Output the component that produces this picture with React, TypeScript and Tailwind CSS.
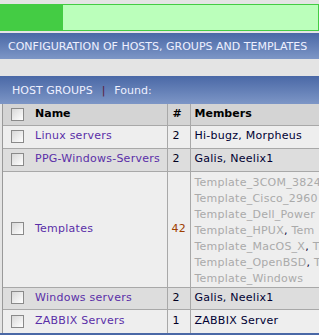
import React from "react";

const font = { fontFamily: '"DejaVu Sans", Verdana, sans-serif' };

function Check() {
  return (
    <span className="inline-block w-[13px] h-[13px] border border-[#8a8a8a] bg-gradient-to-br from-[#d8d8d8] to-[#ffffff] align-middle" />
  );
}

const templates = [
  "Template_3COM_3824",
  "Template_Cisco_2960",
  "Template_Dell_Power",
  "Template_HPUX, Tem",
  "Template_MacOS_X, T",
  "Template_OpenBSD, T",
  "Template_Windows",
];

type Row = { name: string; count: string; members: string; bg: string };

export default function App() {
  const rows: Row[] = [
    { name: "Linux servers", count: "2", members: "Hi-bugz, Morpheus", bg: "bg-[#eeeeee]" },
    { name: "PPG-Windows-Servers", count: "2", members: "Galis, Neelix1", bg: "bg-[#dddddd]" },
  ];
  return (
    <div className="w-[319px] h-[335px] overflow-hidden bg-[#e4e4e4] text-[11px]" style={font}>
      <div className="h-[4px]" />
      <div className="h-[27px] flex border border-[#44cc44] bg-[#bbffbb]">
        <div className="w-[62px] bg-[#44cc44]" />
      </div>
      <div className="h-[2px]" />
      <div className="h-[26px] flex items-center pl-[8px] pt-[2px] bg-gradient-to-b from-[#4a68a6] to-[#7d96c6] text-[#eef0ff] whitespace-nowrap">
        CONFIGURATION OF HOSTS, GROUPS AND TEMPLATES
      </div>
      <div className="h-[17px]" />
      <div className="h-[28px] flex items-center pl-[12px] pt-[2px] bg-gradient-to-b from-[#4a68a6] to-[#7d96c6] text-[#eef0ff] whitespace-nowrap">
        <span>HOST GROUPS</span>
        <span className="mx-[9px] text-[#5a1a3a]">|</span>
        <span>Found:</span>
      </div>
      <div className="ml-[2px] border-l border-[#999999] w-[400px] tracking-[0.25px]">
        <table className="border-collapse w-full">
          <tbody>
            <tr className="bg-[#d4d4d4] h-[21px] border-b border-[#a8a8a8]">
              <td className="w-[24px] pl-[8px] pr-0"><Check /></td>
              <td className="w-[140px] pl-[8px] font-bold text-[#000000] tracking-normal">Name</td>
              <td className="w-[23px] pl-[5px] font-bold border-l border-r border-[#a8a8a8]">#</td>
              <td className="pl-[4px] font-bold tracking-normal">Members</td>
            </tr>
            {rows.map((r) => (
              <tr key={r.name} className={`${r.bg} h-[23px] border-b border-[#a8a8a8]`}>
                <td className="pl-[8px]"><Check /></td>
                <td className="pl-[8px] text-[#5a2fa8] whitespace-nowrap">{r.name}</td>
                <td className="pl-[5px] border-l border-r border-[#a8a8a8] text-[#000022]">{r.count}</td>
                <td className="pl-[4px] whitespace-nowrap text-[#000033]">{r.members}</td>
              </tr>
            ))}
            <tr className="bg-[#eeeeee] h-[115px] border-b border-[#a8a8a8]">
              <td className="pl-[8px]"><Check /></td>
              <td className="pl-[8px] text-[#5a2fa8]">Templates</td>
              <td className="pl-[4px] border-l border-r border-[#a8a8a8] text-[#a04000]">42</td>
              <td className="pl-[4px] pt-[3px] align-top whitespace-nowrap leading-[16px]">
                {templates.map((t) => {
                  const i = t.indexOf(",");
                  return (
                    <div key={t} className="text-[#aaaaaa]">
                      {i >= 0 ? (
                        <>
                          {t.slice(0, i)}
                          <span className="text-[#000033]">,</span>
                          {t.slice(i + 1)}
                        </>
                      ) : (
                        t
                      )}
                    </div>
                  );
                })}
              </td>
            </tr>
            <tr className="bg-[#dddddd] h-[22px] border-b border-[#a8a8a8]">
              <td className="pl-[8px]"><Check /></td>
              <td className="pl-[8px] text-[#5a2fa8]">Windows servers</td>
              <td className="pl-[5px] border-l border-r border-[#a8a8a8] text-[#000022]">2</td>
              <td className="pl-[4px] text-[#000033]">Galis, Neelix1</td>
            </tr>
            <tr className="bg-[#eeeeee] h-[24px]">
              <td className="pl-[8px]"><Check /></td>
              <td className="pl-[8px] text-[#5a2fa8]">ZABBIX Servers</td>
              <td className="pl-[5px] border-l border-r border-[#a8a8a8] text-[#000022]">1</td>
              <td className="pl-[4px] text-[#000033]">ZABBIX Server</td>
            </tr>
          </tbody>
        </table>
      </div>
      <div className="h-[4px] bg-[#4a68a6]" />
    </div>
  );
}
